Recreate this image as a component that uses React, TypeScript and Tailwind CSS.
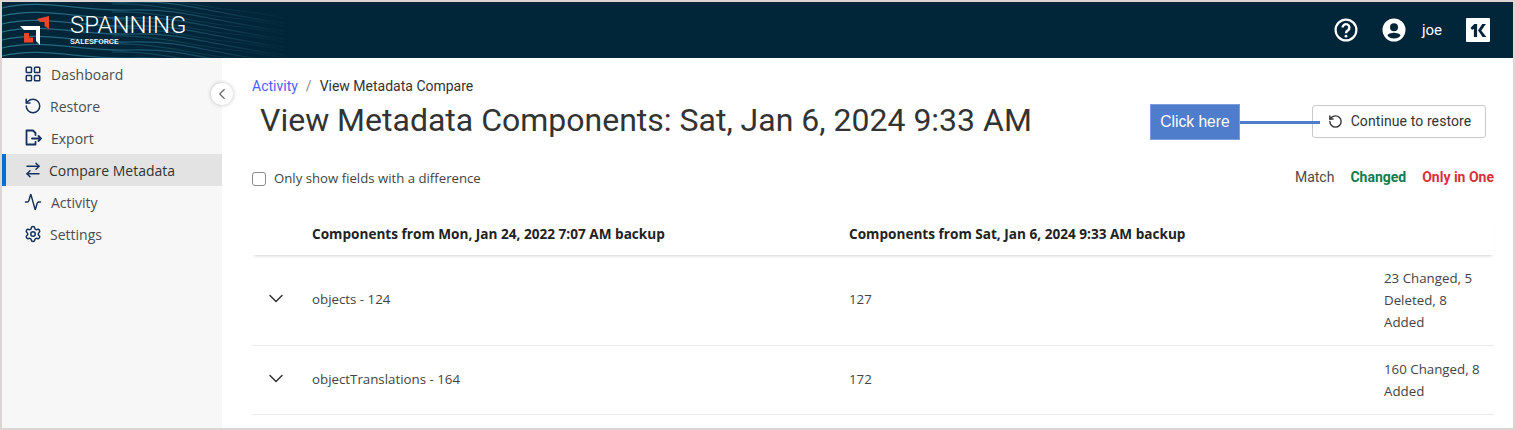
import { Activity, ArrowRightLeft, ChevronDown, ChevronLeft, LayoutGrid, RotateCcw, Settings } from 'lucide-react';

const navItems = [
  { label: 'Dashboard', icon: 'grid', textClass: 'ml-[9px]' },
  { label: 'Restore', icon: 'restore', textClass: 'ml-[8px]' },
  { label: 'Export', icon: 'export', textClass: 'ml-[9px]' },
  { label: 'Compare Metadata', icon: 'compare', textClass: 'ml-[7px]', active: true },
  { label: 'Activity', icon: 'activity', textClass: 'ml-[9px]' },
  { label: 'Settings', icon: 'settings', textClass: 'ml-[8px]' },
];

const rows = [
  { name: 'objects - 124', count: '127', diff: '23 Changed, 5 Deleted, 8 Added', height: 'h-[91px]' },
  { name: 'objectTranslations - 164', count: '172', diff: '160 Changed, 8 Added', height: 'h-[69px]' },
];

const NavIcon = ({ icon }: { icon: string }) => {
  const cls = 'h-[18px] w-[18px] text-[#16325c]';
  if (icon === 'grid') return <LayoutGrid className={cls} strokeWidth={2} />;
  if (icon === 'restore') return <RotateCcw className={cls} strokeWidth={2} />;
  if (icon === 'compare') return <ArrowRightLeft className={cls} strokeWidth={2} />;
  if (icon === 'activity') return <Activity className={cls} strokeWidth={2} />;
  if (icon === 'settings') return <Settings className={cls} strokeWidth={2} />;
  return (
    <svg viewBox="0 0 18 18" className={cls} fill="none" stroke="currentColor" strokeWidth="1.8" strokeLinecap="round" strokeLinejoin="round">
      <path d="M11.5 6V4L9 1.5H2.5v14h9v-2.5" />
      <path d="M8 9.5h9M14.5 7l2.5 2.5L14.5 12" />
    </svg>
  );
};

const waveOffsets = [-8, 0, 8, 16, 24, 32, 40, 48, 56];

const Waves = () => (
  <svg viewBox="0 0 300 56" className="absolute left-0 top-0 h-[56px] w-[300px]" fill="none" strokeWidth="1.2">
    <defs>
      <linearGradient id="waveFade" gradientUnits="userSpaceOnUse" x1="0" y1="0" x2="290" y2="0">
        <stop offset="0" stopColor="#2a6f88" />
        <stop offset="0.55" stopColor="#1d566d" />
        <stop offset="1" stopColor="#012639" />
      </linearGradient>
    </defs>
    {waveOffsets.map((y) => (
      <path key={y} stroke="url(#waveFade)" d={`M0 ${y + 6}C40 ${y - 4} 80 ${y + 10} 130 ${y + 8}S210 ${y + 20} 290 ${y + 30}`} />
    ))}
    {waveOffsets.map((y) => (
      <path key={`b${y}`} stroke="url(#waveFade)" opacity="0.6" d={`M110 ${y + 2}C150 ${y} 190 ${y + 12} 230 ${y + 16}S260 ${y + 20} 290 ${y + 26}`} />
    ))}
  </svg>
);

export default function App() {
  return (
    <div className="relative flex h-[430px] w-[1515px] flex-col overflow-hidden border-2 border-[#ddd5d3] bg-white font-['Open_Sans',sans-serif] text-[#333]">
      <header className="relative flex h-[56px] shrink-0 items-center bg-[#012639] text-white">
        <Waves />
        <svg viewBox="0 0 30 30" className="relative ml-[18px] mt-[2px] h-[30px] w-[30px]">
          <path d="M0 10H20V29L16 25V14H4Z" fill="#fff" />
          <path d="M17 3L29 0V13L24.500 10V6H20Z" fill="#e8452c" />
          <path d="M4 17H9V21.500H13V26.500H4Z" fill="#e8452c" />
        </svg>
        <div className="relative ml-[20px] flex flex-col font-['Roboto',sans-serif]">
          <span className="-mt-[2px] text-[24px] font-light leading-[26px]">SPANNING</span>
          <span className="text-[8px] font-medium leading-[8px]">SALESFORCE</span>
        </div>
        <div className="relative ml-auto flex items-center font-['Roboto',sans-serif]">
          <svg viewBox="0 0 24 24" className="h-[24px] w-[24px]" fill="none" stroke="#fff" strokeWidth="2.2">
            <circle cx="12" cy="12" r="10.4" />
            <path d="M8.6 9.6a3.4 3.4 0 1 1 5.4 2.7c-1.2.8-2 1.4-2 2.9" strokeWidth="2.4" />
            <circle cx="12" cy="18.2" r="1.4" fill="#fff" stroke="none" />
          </svg>
          <svg viewBox="0 0 24 24" className="ml-[24px] h-[24px] w-[24px]" fill="#fff">
            <path d="M12 .5a11.500 11.500 0 1 0 0 23 11.500 11.500 0 0 0 0-23Zm0 4.700a4 4 0 1 1 0 8 4 4 0 0 1 0-8Zm0 15.300c-2.900 0-5.500-1.200-6.500-3 .1-1.800 4.300-2.800 6.500-2.800s6.400 1 6.500 2.800c-1 1.800-3.600 3-6.500 3Z" />
          </svg>
          <span className="ml-[16px] text-[15px]">joe</span>
          <div className="ml-[24px] mr-[23px] flex h-[24px] w-[24px] items-center justify-center rounded-[1px] bg-white">
            <svg viewBox="0 0 17 14" className="h-[13px] w-[17px]" fill="#012639">
              <path d="M0 4 4 0h3v14H3.500V5L1.500 6.500Z" />
              <path d="M8 7 12.500 0h4L11.500 7l5.500 7h-4Z" />
            </svg>
          </div>
        </div>
      </header>

      <div className="relative flex min-h-0 flex-1">
        <nav className="w-[220px] shrink-0 bg-[#f7f7f7]">
          {navItems.map((item) => (
            <div
              key={item.label}
              className={
                item.active
                  ? 'flex h-[32px] items-center border-l-4 border-[#0070d2] bg-[#e3e3e3] pl-[18px] text-[14px] text-[#333]'
                  : 'flex h-[32px] items-center pl-[22px] text-[14px] text-[#4a4e52]'
              }
            >
              <NavIcon icon={item.icon} />
              <span className={item.textClass}>{item.label}</span>
            </div>
          ))}
        </nav>

        <button className="absolute left-[209px] top-[25px] flex h-[22px] w-[22px] items-center justify-center rounded-full bg-white shadow-[0_0_4px_rgba(0,0,0,0.25)]">
          <ChevronLeft className="h-[18px] w-[18px] text-[#666]" strokeWidth={1.5} />
        </button>

        <main className="relative min-w-0 flex-1 pl-[30px] pr-[19px]">
          <div className="pt-[20px] font-['Roboto',sans-serif] text-[14px] leading-[16px]">
            <span className="text-[#4d60ff]">Activity</span>
            <span className="mx-[8px] text-[#888]">/</span>
            <span className="text-[#333]">View Metadata Compare</span>
          </div>

          <div className="relative mt-[2px] flex h-[50px] items-center justify-between">
            <h1 className="mb-[2px] ml-[8px] font-['Roboto',sans-serif] text-[32px] font-normal leading-[40px] text-[#333]">
              View Metadata Components: Sat, Jan 6, 2024 9:33 AM
            </h1>
            <button className="mr-[8px] flex h-[33px] w-[174px] items-center justify-center rounded-[3px] border border-[#c9c9c9] bg-white pl-[1px] font-['Roboto',sans-serif] text-[14px] tracking-[0.1px] text-[#333]">
              <RotateCcw className="mr-[8px] h-[15px] w-[15px]" strokeWidth={2.2} />
              Continue to restore
            </button>
          </div>

          <div className="mt-[20px] flex h-[26px] items-center justify-between">
            <label className="flex items-center text-[13.2px] text-[#444]">
              <span className="h-[14px] w-[14px] rounded-[3px] border border-[#8a8a8a] bg-white" />
              <span className="ml-[8px]">Only show fields with a difference</span>
            </label>
            <div className="mb-[4px] flex font-['Roboto',sans-serif] text-[14px]">
              <span className="text-[#4a4a4a]">Match</span>
              <span className="ml-[16px] font-bold text-[#107c4f]">Changed</span>
              <span className="ml-[16px] font-bold text-[#d9303a]">Only in One</span>
            </div>
          </div>

          <div className="mt-[22px] flex h-[41px] items-center text-[13.6px] font-bold text-[#222] shadow-[0_3px_3px_-2px_rgba(0,0,0,0.18)]">
            <div className="ml-[60px] w-[537px]">Components from Mon, Jan 24, 2022 7:07 AM backup</div>
            <div>Components from Sat, Jan 6, 2024 9:33 AM backup</div>
          </div>

          {rows.map((row) => (
            <div key={row.name} className={`flex items-center border-b border-[#ebebeb] text-[13.3px] text-[#444] ${row.height}`}>
              <ChevronDown className="ml-[12px] mr-[24px] h-[24px] w-[24px] -translate-y-[1.5px] text-[#333]" strokeWidth={1.5} />
              <div className="w-[537px]">{row.name}</div>
              <div className="w-[535px]">{row.count}</div>
              <div className="w-[104px] leading-[22px]">{row.diff}</div>
            </div>
          ))}

          <div className="absolute left-[928px] top-[46px] flex items-center">
            <div className="flex h-[36px] w-[90px] items-center justify-center border border-[#7c9fdc] bg-[#4f7ccb] font-['Liberation_Sans',sans-serif] text-[15.6px] text-white">
              Click here
            </div>
            <div className="h-[3px] w-[80px] bg-[#4f7ccb]" />
          </div>
        </main>
      </div>
    </div>
  );
}
